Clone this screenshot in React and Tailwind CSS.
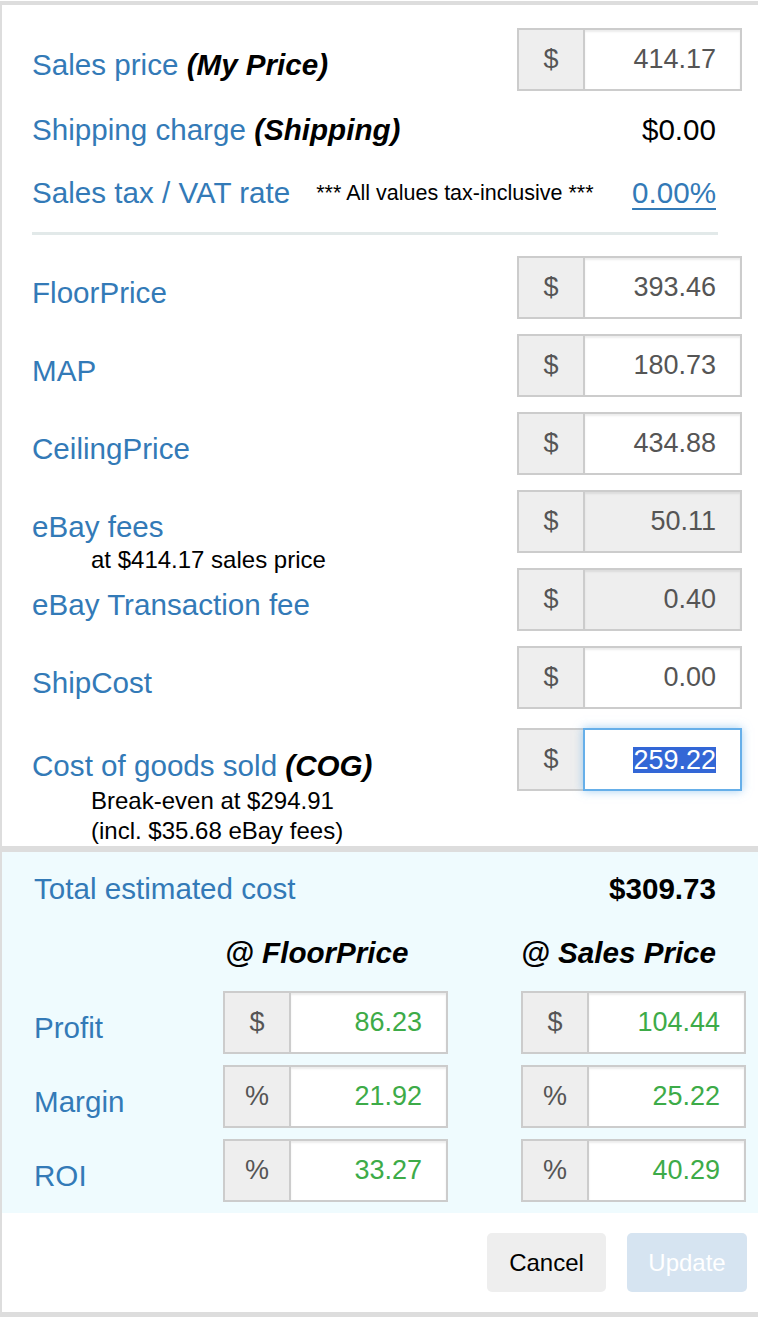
import clsx from "clsx";

const topRows = [
  { label: "FloorPrice", value: "393.46", mt: "mt-[21px]" },
  { label: "MAP", value: "180.73", mt: "mt-[15px]" },
  { label: "CeilingPrice", value: "434.88", mt: "mt-[15px]" },
  { label: "eBay fees", value: "50.11", mt: "mt-[15px]", readOnly: true, note: "at $414.17 sales price" },
  { label: "eBay Transaction fee", value: "0.40", mt: "mt-[15px]", readOnly: true },
  { label: "ShipCost", value: "0.00", mt: "mt-[15px]" },
];

const resultRows = [
  { label: "Profit", addon: "$", floor: "86.23", sales: "104.44" },
  { label: "Margin", addon: "%", floor: "21.92", sales: "25.22" },
  { label: "ROI", addon: "%", floor: "33.27", sales: "40.29" },
];

const InputGroup = ({ addon = "$", value, readOnly, focused, green }) => (
  <div className="flex h-[63px] w-[225px] shrink-0">
    <div className="flex w-[66px] items-center justify-center border-2 border-r-0 border-[#ccc] bg-[#eee] text-[27px] text-[#555]">
      {addon}
    </div>
    <div
      className={clsx(
        "flex flex-1 items-center justify-end border-2 pr-[24px] text-[27px]",
        focused
          ? "border-[#66afe9] bg-white shadow-[0_0_9px_rgba(102,175,233,0.6)]"
          : "border-[#ccc] shadow-[inset_0_2px_2px_rgba(0,0,0,0.075)]",
        readOnly ? "bg-[#eee]" : "bg-white",
        green ? "text-[#3dab48]" : "text-[#555]"
      )}
    >
      {focused ? <span className="bg-[#3367d6] leading-[26px] text-white">{value}</span> : value}
    </div>
  </div>
);

const App = () => {
  return (
    <div className="min-h-screen bg-white pt-px font-['Liberation_Sans',Arial,sans-serif]">
      <div className="border-t-4 border-b-[5px] border-l-2 border-[#ddd]">
        {/* prices */}
        <div className="pl-[30px] pr-[16px] pt-[23px]">
          <div className="flex h-[63px] items-start justify-between">
            <div className="mt-[19px] text-[29.6px] leading-[36px] text-[#337ab7]">
              Sales price <b className="italic text-black">(My Price)</b>
            </div>
            <InputGroup value="414.17" />
          </div>

          <div className="mt-[8px] flex h-[63px] items-center justify-between pr-[26px] text-[29.6px]">
            <div className="text-[#337ab7]">
              Shipping charge <b className="italic text-black">(Shipping)</b>
            </div>
            <div className="text-black">$0.00</div>
          </div>

          <div className="flex h-[63px] items-center pr-[26px]">
            <div className="text-[29.6px] text-[#337ab7]">Sales tax / VAT rate</div>
            <div className="ml-[26px] text-[21.5px] text-black">*** All values tax-inclusive ***</div>
            <a href="#" className="ml-auto text-[29.6px] text-[#337ab7] underline decoration-2 underline-offset-[5px]">
              0.00%
            </a>
          </div>

          <div className="mr-[24px] mt-[7px] h-[3px] bg-[#e2e9e9]" />

          {topRows.map((row) => (
            <div key={row.label} className={clsx("flex h-[63px] items-start justify-between", row.mt)}>
              <div>
                <div className="mt-[19px] text-[29.6px] leading-[36px] text-[#337ab7]">{row.label}</div>
                {row.note && <div className="ml-[59px] text-[24px] leading-[30px] text-black">{row.note}</div>}
              </div>
              <InputGroup value={row.value} readOnly={row.readOnly} />
            </div>
          ))}

          <div className="mt-[19px] flex items-start justify-between">
            <div>
              <div className="mt-[18px] text-[29.6px] leading-[40px] text-[#337ab7]">
                Cost of goods sold <b className="italic text-black">(COG)</b>
              </div>
              <div className="ml-[59px] text-[24px] leading-[30px] text-black">
                <div>Break-even at $294.91</div>
                <div>(incl. $35.68 eBay fees)</div>
              </div>
            </div>
            <InputGroup value="259.22" focused />
          </div>
        </div>

        {/* results */}
        <div className="border-t-[6px] border-[#ddd] bg-[#effbfe] pb-[11px] pl-[32px] pr-[12px]">
          <div className="flex h-[74px] items-center justify-between pr-[30px] text-[29.6px]">
            <div className="text-[#337ab7]">Total estimated cost</div>
            <b className="text-black">$309.73</b>
          </div>

          <div className="grid grid-cols-[189px_298px_225px]">
            <div />
            <b className="flex h-[54px] items-center pl-[2px] text-[29.6px] italic text-black">@ FloorPrice</b>
            <b className="flex h-[54px] items-center text-[29.6px] italic text-black">@ Sales Price</b>
          </div>

          <div className="mt-[11px] flex flex-col gap-[11px]">
            {resultRows.map((row) => (
              <div key={row.label} className="grid h-[63px] grid-cols-[189px_298px_225px]">
                <div className="mt-[19px] text-[29.6px] leading-[36px] text-[#337ab7]">{row.label}</div>
                <InputGroup addon={row.addon} value={row.floor} green />
                <InputGroup addon={row.addon} value={row.sales} green />
              </div>
            ))}
          </div>
        </div>

        {/* actions */}
        <div className="flex justify-end gap-[21px] py-[20px] pr-[11px]">
          <button type="button" className="h-[59px] w-[119px] rounded-[5px] bg-[#eee] text-[24px] text-black">
            Cancel
          </button>
          <button type="button" disabled className="h-[59px] w-[120px] rounded-[5px] bg-[#d6e4f1] text-[24px] text-white">
            Update
          </button>
        </div>
      </div>
    </div>
  );
};

export default App;
